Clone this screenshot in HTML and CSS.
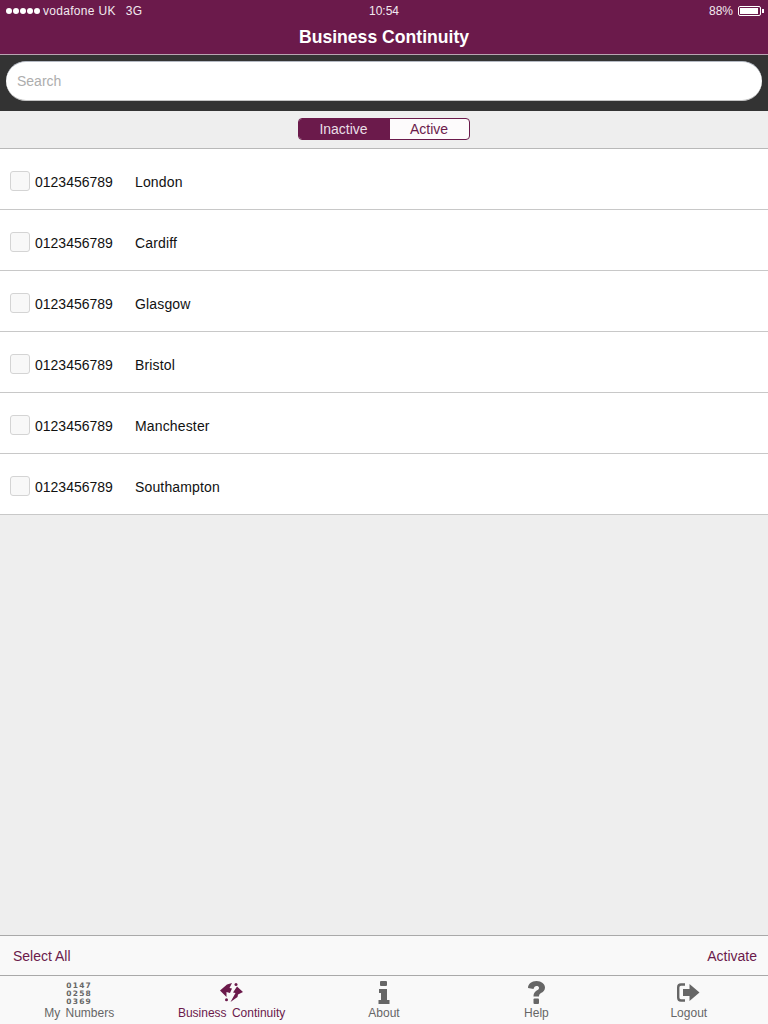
FILE: index.html
```html
<!DOCTYPE html>
<html lang="en">
<head>
    <meta charset="UTF-8">
    <meta name="viewport" content="width=device-width, initial-scale=1.0">
    <title>Business Continuity</title>
    <link rel="stylesheet" href="styles.css">
</head>
<body>
    <header class="topbar">
        <div class="status">
            <div class="status-left">
                <span class="signal"><i></i><i></i><i></i><i></i><i></i></span>
                <span>vodafone UK</span>
                <span class="network">3G</span>
            </div>
            <div class="status-time">10:54</div>
            <div class="status-right">
                <span>88%</span>
                <span class="battery"><span class="battery-level"></span></span>
                <span class="battery-tip"></span>
            </div>
        </div>
        <h1 class="title">Business Continuity</h1>
    </header>

    <div class="searchbar">
        <input class="search" type="text" placeholder="Search">
    </div>

    <div class="togglebar">
        <div class="toggle">
            <span class="toggle-item selected">Inactive</span>
            <span class="toggle-item">Active</span>
        </div>
    </div>

    <!-- Number list -->
    <ul class="numbers">
        <li class="row"><span class="check"></span><span class="num">0123456789</span><span class="city">London</span></li>
        <li class="row"><span class="check"></span><span class="num">0123456789</span><span class="city">Cardiff</span></li>
        <li class="row"><span class="check"></span><span class="num">0123456789</span><span class="city">Glasgow</span></li>
        <li class="row"><span class="check"></span><span class="num">0123456789</span><span class="city">Bristol</span></li>
        <li class="row"><span class="check"></span><span class="num">0123456789</span><span class="city">Manchester</span></li>
        <li class="row"><span class="check"></span><span class="num">0123456789</span><span class="city">Southampton</span></li>
    </ul>

    <div class="actions">
        <span>Select All</span>
        <span>Activate</span>
    </div>

    <nav class="tabs">
        <div class="tab">
            <div class="tab-icon digits">0147<br>0258<br>0369</div>
            <div class="tab-label">My Numbers</div>
        </div>
        <div class="tab current">
            <div class="tab-icon">
                <svg width="23" height="19" viewBox="0 0 23 19">
                    <path d="M0 7.500 L7 1.500 L12 0 L9.500 5 L12 5.500 L10 10 L6.500 9 L6.500 14 Z" fill="#6b1a4b"/>
                    <path d="M23 9 L17 3.500 L13 9.500 L15.500 10 L10.500 19 L17.500 14 L18 11.500 Z" fill="#6b1a4b"/>
                    <circle cx="16" cy="1.500" r="1.500" fill="#6b1a4b"/>
                    <circle cx="6.500" cy="16.800" r="1.500" fill="#6b1a4b"/>
                </svg>
            </div>
            <div class="tab-label">Business Continuity</div>
        </div>
        <div class="tab">
            <div class="tab-icon">
                <svg width="12" height="23" viewBox="0 0 12 23">
                    <rect x="2" y="0" width="7" height="5" rx="1" fill="#666"/>
                    <path d="M1 8 H9 V19 H11.500 V23 H0.500 V19 H3 V12 H1 Z" fill="#666"/>
                </svg>
            </div>
            <div class="tab-label">About</div>
        </div>
        <div class="tab">
            <div class="tab-icon">
                <svg width="17" height="23" viewBox="0 0 17 23">
                    <path d="M0 7 C0 3 3.500 0 8.500 0 C13.500 0 17 3 17 6.500 C17 9.500 15 11 13 12 C11.500 13 11 14 11 15.500 H5.500 C5.500 13 6 11.500 8 10 C9.500 9 11 8.500 11 7 C11 5.500 10 5 8.500 5 C7 5 6 6 5.500 8 Z" fill="#666"/>
                    <rect x="5.500" y="17.500" width="5.500" height="5.500" rx="1" fill="#666"/>
                </svg>
            </div>
            <div class="tab-label">Help</div>
        </div>
        <div class="tab">
            <div class="tab-icon">
                <svg width="23" height="19" viewBox="0 0 23 19">
                    <path d="M8 1.500 H4 C2 1.500 1.200 2.500 1.200 4.500 V14.500 C1.200 16.500 2 17.500 4 17.500 H8" fill="none" stroke="#666" stroke-width="2.400"/>
                    <path d="M6 6 H12.500 V1 L22.500 9.500 L12.500 18 V13 H6 Z" fill="#666"/>
                </svg>
            </div>
            <div class="tab-label">Logout</div>
        </div>
    </nav>
</body>
</html>
```
FILE: styles.css
```css
* {
    box-sizing: border-box;
}
body {
    margin: 0;
    height: 100vh;
    display: flex;
    flex-direction: column;
    overflow: hidden;
    background-color: #eeeeee;
    font-family: "Liberation Sans", Arial, sans-serif;
    color: #111;
}

/* Top bar */
.topbar {
    height: 55px;
    background-color: #6b1a4b;
    border-bottom: 1px solid #b9a3b1;
    color: white;
}
.status {
    height: 22px;
    padding: 0 6px;
    display: grid;
    grid-template-columns: 1fr auto 1fr;
    align-items: center;
    font-size: 12px;
    color: #f2e9ef;
}
.status-left {
    display: flex;
    align-items: center;
    gap: 3px;
    letter-spacing: 0.300px;
}
.network {
    margin-left: 7px;
}
.signal {
    display: flex;
    gap: 1px;
}
.signal i {
    width: 6px;
    height: 6px;
    border-radius: 50%;
    background-color: white;
}
.status-right {
    display: flex;
    justify-content: flex-end;
    align-items: center;
    margin-right: -2px;
}
.battery {
    width: 23px;
    height: 10px;
    margin-left: 5px;
    padding: 1px;
    border: 1px solid white;
    border-radius: 2px;
}
.battery-level {
    display: block;
    width: 18px;
    height: 6px;
    background-color: white;
}
.battery-tip {
    width: 2px;
    height: 4px;
    margin-left: 1px;
    background-color: white;
}
.title {
    margin: 0;
    text-align: center;
    font-size: 17.600px;
    line-height: 30px;
    font-weight: bold;
}

/* Search */
.searchbar {
    height: 56px;
    padding: 6px 6px 10px;
    background-color: #333333;
}
.search {
    display: block;
    width: 100%;
    height: 40px;
    padding: 0 11px;
    border: 0;
    border-top: 1px solid #b5bac4;
    border-bottom: 1px solid #c4c4c4;
    border-radius: 20px;
    background-color: white;
    font-family: inherit;
    font-size: 14px;
}
.search::placeholder {
    color: #adadad;
}

/* Inactive / Active */
.togglebar {
    height: 38px;
    padding-top: 7px;
    display: flex;
    justify-content: center;
    align-items: flex-start;
    border-bottom: 1px solid #b8b8b8;
}
.toggle {
    width: 172px;
    height: 22px;
    display: flex;
    border: 1px solid #6b1a4b;
    border-radius: 4px;
    background-color: #fdfbfc;
    overflow: hidden;
}
.toggle-item {
    flex: 1;
    padding-right: 1px;
    text-align: center;
    font-size: 14px;
    line-height: 21px;
    color: #6b1a4b;
}
.toggle-item.selected {
    flex: 0 0 91px;
    padding-right: 2px;
    background-color: #6b1a4b;
    color: #e9dfe6;
}

/* Rows */
.numbers {
    margin: 0;
    padding: 0;
    list-style: none;
    background-color: white;
}
.row {
    height: 61px;
    padding: 22px 0 0 10px;
    display: flex;
    align-items: flex-start;
    border-bottom: 1px solid #c8c8c8;
    font-size: 14px;
}
.check {
    width: 20px;
    height: 20px;
    border: 1px solid #d4d4d4;
    border-radius: 3px;
    background-color: #f8f8f8;
}
.num {
    width: 100px;
    margin-left: 5px;
    line-height: 22px;
}
.city {
    line-height: 22px;
    letter-spacing: 0.150px;
}

/* Bottom */
.actions {
    margin-top: auto;
    height: 41px;
    padding: 1px 11px 0 13px;
    display: flex;
    justify-content: space-between;
    align-items: center;
    background-color: #f9f9f9;
    border-top: 1px solid #a9a9a9;
    border-bottom: 1px solid #a9a9a9;
    font-size: 14px;
    color: #6b1a4b;
}
.tabs {
    height: 48px;
    display: grid;
    grid-template-columns: repeat(5, 1fr);
    background-color: #f9f9f9;
    padding: 0 3px;
    color: #666;
}
.tab {
    display: flex;
    flex-direction: column;
    align-items: center;
}
.tab-icon {
    height: 30px;
    padding-top: 3px;
    display: flex;
    align-items: center;
    justify-content: center;
}
.tab-label {
    font-size: 12px;
    line-height: 14px;
    word-spacing: 2px;
}
.digits {
    display: block;
    padding-top: 6px;
    font-family: "DejaVu Sans", sans-serif;
    font-size: 7.500px;
    font-weight: bold;
    line-height: 8px;
    letter-spacing: 1.200px;
    text-align: center;
}
.tab.current {
    color: #6b1a4b;
}
```
